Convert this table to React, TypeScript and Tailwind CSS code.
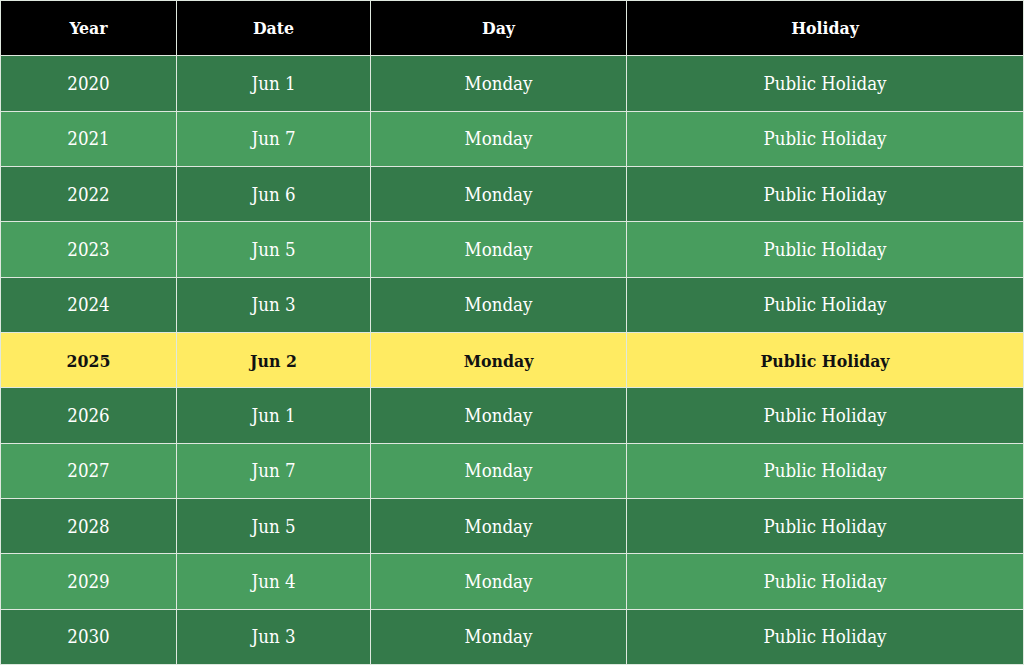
const ROWS = [
  { year: "2020", date: "Jun 1" },
  { year: "2021", date: "Jun 7" },
  { year: "2022", date: "Jun 6" },
  { year: "2023", date: "Jun 5" },
  { year: "2024", date: "Jun 3" },
  { year: "2025", date: "Jun 2", current: true },
  { year: "2026", date: "Jun 1" },
  { year: "2027", date: "Jun 7" },
  { year: "2028", date: "Jun 5" },
  { year: "2029", date: "Jun 4" },
  { year: "2030", date: "Jun 3" },
];

const HEADERS = ["Year", "Date", "Day", "Holiday"];

export default function App() {
  return (
    <div
      className="grid h-[665px] w-[1024px] grid-cols-[175px_193px_255px_1fr] grid-rows-[repeat(12,1fr)] gap-px bg-[#dfe8df] p-px text-[18.5px]"
      style={{ fontFamily: '"DejaVu Serif Condensed", "DejaVu Serif", serif' }}
    >
      {HEADERS.map((h) => (
        <div key={h} className="flex items-center justify-center bg-black text-[17.5px] font-bold text-white">
          {h}
        </div>
      ))}
      {ROWS.map((row, i) => {
        const bg = row.current
          ? "bg-[#ffeb62] text-[#111] font-bold text-[17.5px]"
          : i % 2 === 0
            ? "bg-[#347a4a] text-white"
            : "bg-[#489d5e] text-white";
        return [row.year, row.date, "Monday", "Public Holiday"].map((cell, j) => (
          <div key={`${row.year}-${j}`} className={`flex items-center justify-center pt-px ${bg}`}>
            {cell}
          </div>
        ));
      })}
    </div>
  );
}
